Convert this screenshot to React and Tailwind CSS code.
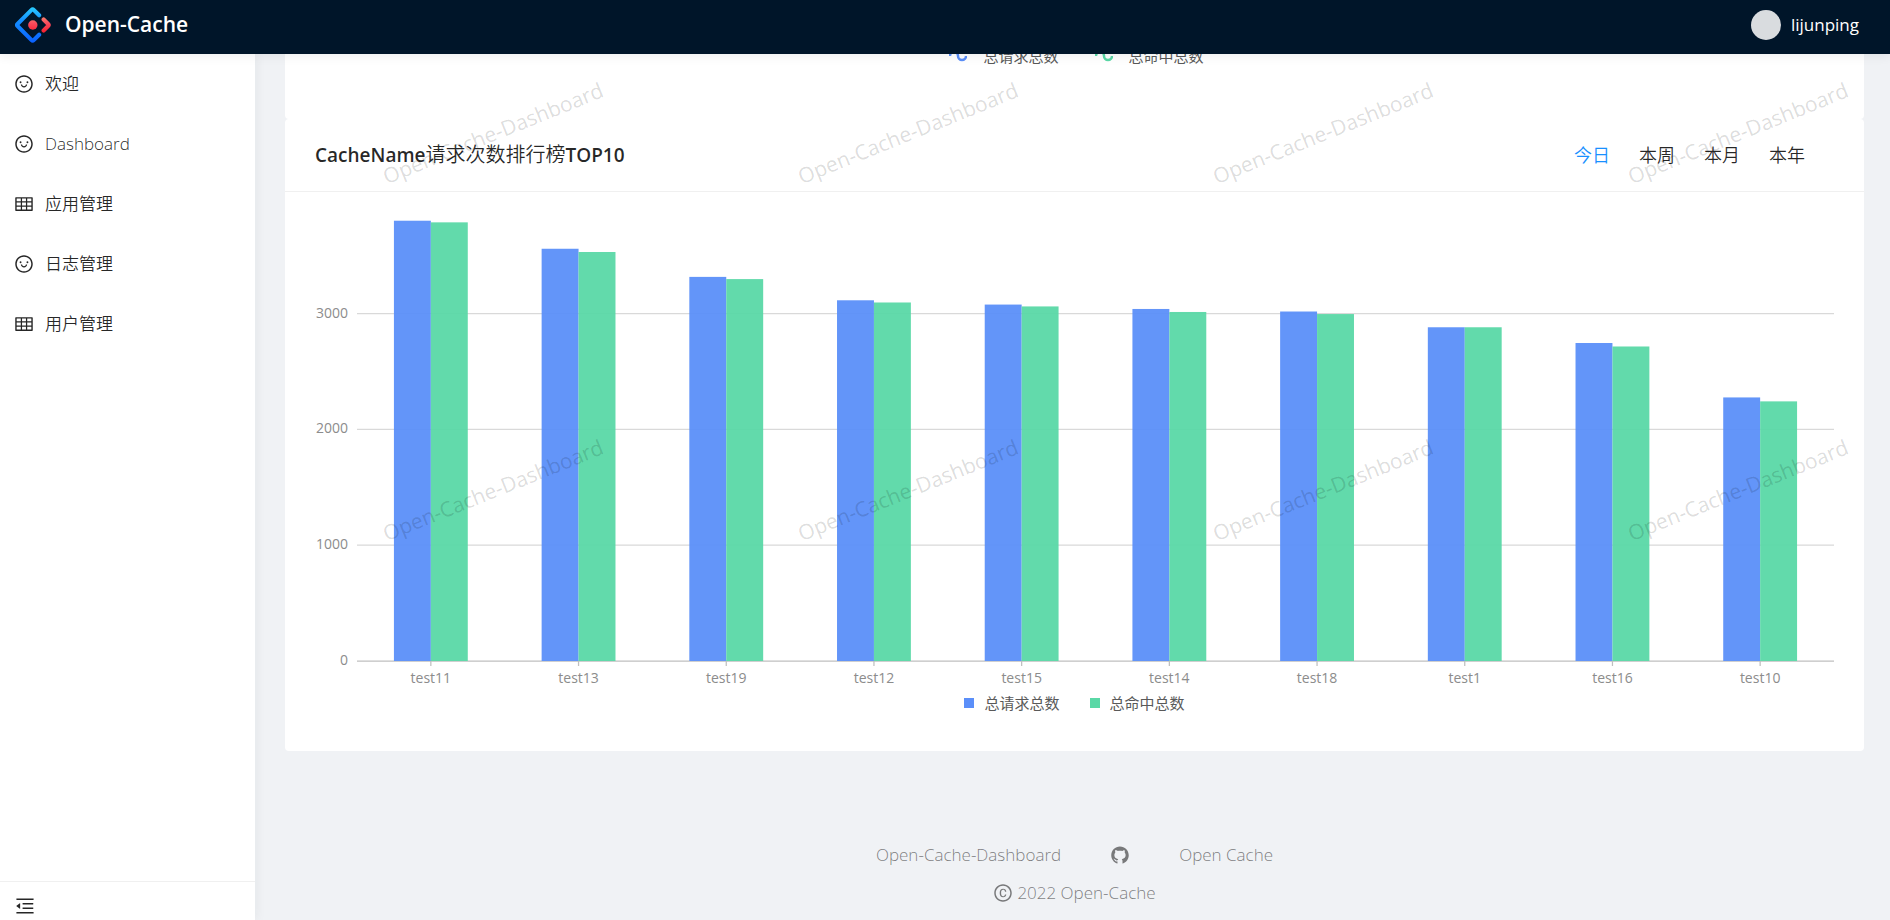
import {
  AiOutlineSmile,
  AiOutlineTable,
  AiOutlineMenuFold,
  AiFillGithub,
  AiOutlineCopyright,
} from "react-icons/ai";

const MENU = [
  { label: "欢迎", icon: AiOutlineSmile },
  { label: "Dashboard", icon: AiOutlineSmile },
  { label: "应用管理", icon: AiOutlineTable },
  { label: "日志管理", icon: AiOutlineSmile },
  { label: "用户管理", icon: AiOutlineTable },
];

const RANGES = ["今日", "本周", "本月", "本年"];

const DATA = [
  { name: "test11", total: 3802, hit: 3788 },
  { name: "test13", total: 3560, hit: 3532 },
  { name: "test19", total: 3317, hit: 3298 },
  { name: "test12", total: 3115, hit: 3096 },
  { name: "test15", total: 3078, hit: 3062 },
  { name: "test14", total: 3040, hit: 3014 },
  { name: "test18", total: 3018, hit: 2996 },
  { name: "test1", total: 2882, hit: 2882 },
  { name: "test16", total: 2746, hit: 2716 },
  { name: "test10", total: 2276, hit: 2242 },
];

const BASE = 440;
const PER_UNIT = 0.1158;
const yOf = (v) => BASE - v * PER_UNIT;

function Logo() {
  return (
    <svg width="36" height="36" viewBox="0 0 200 200" fill="none" aria-hidden="true">
      <defs>
        <linearGradient id="logo-blue" x1="100" y1="0" x2="100" y2="200" gradientUnits="userSpaceOnUse">
          <stop offset="0" stopColor="#29cdff" />
          <stop offset="0.38" stopColor="#148eff" />
          <stop offset="1" stopColor="#0a60ff" />
        </linearGradient>
        <linearGradient id="logo-red" x1="170" y1="55" x2="170" y2="145" gradientUnits="userSpaceOnUse">
          <stop offset="0" stopColor="#fa816e" />
          <stop offset="0.41" stopColor="#f74a5c" />
          <stop offset="1" stopColor="#f51d2c" />
        </linearGradient>
      </defs>
      <path
        d="M134 46 L104 16 Q98 10 92 16 L14 94 Q8 100 14 106 L92 184 Q98 190 104 184 L134 154"
        stroke="url(#logo-blue)"
        strokeWidth="23"
        strokeLinecap="round"
        strokeLinejoin="round"
      />
      <path
        d="M159 69 L184 94 Q190 100 184 106 L159 131"
        stroke="url(#logo-red)"
        strokeWidth="23"
        strokeLinecap="round"
        strokeLinejoin="round"
      />
      <circle cx="99" cy="100" r="26" fill="url(#logo-red)" />
    </svg>
  );
}

function SmoothMarker({ color }) {
  return (
    <svg width="18" height="18" viewBox="0 0 18 18" fill="none" aria-hidden="true">
      <path d="M1 9 A4 4 0 0 1 9 9 A4 4 0 0 0 17 9" stroke={color} strokeWidth="2.5" />
    </svg>
  );
}

function BarChart() {
  const step = 100 / DATA.length;
  return (
    <div className="flex">
      <svg width="42" height="472" className="shrink-0 text-[14px]" fill="#8c8c8c">
        {[0, 1000, 2000, 3000].map((v) => (
          <text key={v} x="33" y={yOf(v) + 4} textAnchor="end">
            {v}
          </text>
        ))}
      </svg>
      <svg height="472" className="min-w-0 flex-1 overflow-visible text-[14px]">
        {[1000, 2000, 3000].map((v) => (
          <line key={v} x1="0" x2="100%" y1={yOf(v)} y2={yOf(v)} stroke="#d9d9d9" strokeWidth="1.25" />
        ))}
        <line x1="0" x2="100%" y1={BASE} y2={BASE} stroke="#bfbfbf" strokeWidth="1.25" />
        {DATA.map((d, i) => {
          const center = step * (i + 0.5);
          return (
            <g key={d.name}>
              <rect
                x={`${center - step / 4}%`}
                y={yOf(d.total)}
                width={`${step / 4}%`}
                height={BASE - yOf(d.total)}
                fill="#5b8ff9"
                fillOpacity="0.95"
              />
              <rect
                x={`${center}%`}
                y={yOf(d.hit)}
                width={`${step / 4}%`}
                height={BASE - yOf(d.hit)}
                fill="#5ad8a6"
                fillOpacity="0.95"
              />
              <line x1={`${center}%`} x2={`${center}%`} y1={BASE} y2={BASE + 5} stroke="#bfbfbf" strokeWidth="1.25" />
              <text x={`${center}%`} y={BASE + 22} textAnchor="middle" fill="#8c8c8c">
                {d.name}
              </text>
            </g>
          );
        })}
      </svg>
    </div>
  );
}

function Watermark() {
  return (
    <div
      aria-hidden="true"
      className="pointer-events-none absolute top-0 -right-[200px] left-0 grid auto-rows-[357px] grid-cols-[repeat(auto-fill,415px)] pl-[134px] pt-[30px]"
    >
      {Array.from({ length: 8 }, (_, i) => (
        <div key={i} className="pt-[78px]">
          <span className="block w-max origin-bottom-left -rotate-[22deg] text-[21px] leading-7 text-black/15">
            Open-Cache-Dashboard
          </span>
        </div>
      ))}
    </div>
  );
}

export default function App() {
  return (
    <div className="flex h-screen flex-col overflow-hidden bg-[#f0f2f5] font-['Open_Sans','Noto_Sans_CJK_SC',sans-serif] text-[17px] text-black/85">
      <header className="z-20 flex h-[54px] shrink-0 items-center justify-between bg-[#001529] pr-[31px] pb-[5px] pl-[15px] text-white shadow-[0_2px_10px_rgba(0,21,41,0.08)]">
        <a href="#home" className="flex items-center gap-[14px]">
          <Logo />
          <h1 className="text-[21px] font-semibold">Open-Cache</h1>
        </a>
        <button type="button" className="flex items-center gap-[10px] text-[17px]">
          <span className="size-[30px] rounded-full bg-[#d9dcdf]" />
          lijunping
        </button>
      </header>

      <div className="flex min-h-0 flex-1">
        <aside className="z-10 flex w-[255px] shrink-0 flex-col bg-white shadow-[2px_0_10px_rgba(29,35,41,0.05)]">
          <nav className="flex flex-1 flex-col font-[350]">
            {MENU.map(({ label, icon: Icon }) => (
              <a key={label} href={`#${label}`} className="flex h-[60px] items-center gap-[11px] px-[14px]">
                <Icon className="size-5" />
                {label}
              </a>
            ))}
          </nav>
          <button
            type="button"
            aria-label="收起菜单"
            className="flex h-[39px] items-center border-t border-[#f0f0f0] px-[14px] pt-[10px]"
          >
            <AiOutlineMenuFold className="size-[22px]" />
          </button>
        </aside>

        <main className="relative flex min-w-0 flex-1 flex-col overflow-hidden pr-[26px] pl-[30px]">
          <section className="flex h-[65px] shrink-0 justify-center gap-9 overflow-hidden rounded-b-sm bg-white pl-1 text-[15px] leading-5 text-[#595959]">
            <span className="-mt-2 flex h-5 items-center gap-4">
              <SmoothMarker color="#5b8ff9" />
              总请求总数
            </span>
            <span className="-mt-2 flex h-5 items-center gap-4">
              <SmoothMarker color="#5ad8a6" />
              总命中总数
            </span>
          </section>

          <section className="flex shrink-0 flex-col rounded-sm bg-white">
            <div className="flex h-[73px] items-center justify-between border-b border-[#f0f0f0] pr-[59px] pl-[30px]">
              <h2 className="text-[19px] font-semibold">
                CacheName<span className="text-xl font-[350]">请求次数排行榜</span>TOP10
              </h2>
              <div className="flex gap-[29px] text-lg font-[350]">
                {RANGES.map((r, i) => (
                  <button key={r} type="button" className={i === 0 ? "text-[#1890ff]" : ""}>
                    {r}
                  </button>
                ))}
              </div>
            </div>
            <div className="px-[30px] pt-[29px] pb-[38px]">
              <BarChart />
              <div className="flex justify-center gap-[30px] text-[15px] leading-5 text-[#595959]">
                <span className="flex items-center gap-[10px]">
                  <i className="size-[10px] bg-[#5b8ff9]" />
                  总请求总数
                </span>
                <span className="flex items-center gap-[10px]">
                  <i className="size-[10px] bg-[#5ad8a6]" />
                  总命中总数
                </span>
              </div>
            </div>
          </section>

          <footer className="mt-[90px] flex flex-col items-center gap-[10px] leading-7 font-light text-black/50">
            <div className="flex items-center gap-[49px]">
              <a href="#dashboard">Open-Cache-Dashboard</a>
              <a href="#github" aria-label="GitHub">
                <AiFillGithub className="size-5" />
              </a>
              <a href="#cache">Open Cache</a>
            </div>
            <div className="flex items-center gap-1">
              <AiOutlineCopyright className="size-5" />
              2022 Open-Cache
            </div>
          </footer>
          <Watermark />
        </main>
      </div>
    </div>
  );
}
